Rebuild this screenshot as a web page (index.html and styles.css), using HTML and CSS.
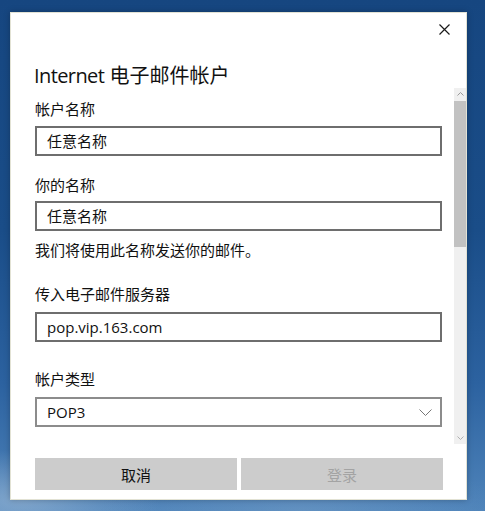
FILE: index.html
```html
<!DOCTYPE html>
<html lang="zh-CN">
<head>
<meta charset="utf-8">
<title>Internet 电子邮件帐户</title>
<link rel="stylesheet" href="styles.css">
</head>
<body>
<div class="dialog">
  <div class="header">
    <div class="close-row">
      <button class="close" aria-label="关闭">
        <svg width="11" height="11" viewBox="0 0 11 11"><path d="M0.5 0.5 L10.5 10.5 M10.5 0.5 L0.5 10.5" stroke="#1a1a1a" stroke-width="1.2" fill="none"/></svg>
      </button>
    </div>
    <h1 class="title"><span class="latin">Internet</span> 电子邮件帐户</h1>
  </div>
  <div class="scroll-row">
    <div class="content">
      <div class="label">帐户名称</div>
      <div class="field gap-7">任意名称</div>
      <div class="label gap-19">你的名称</div>
      <div class="field gap-6">任意名称</div>
      <div class="help gap-9">我们将使用此名称发送你的邮件。</div>
      <div class="label gap-24">传入电子邮件服务器</div>
      <div class="field gap-8">pop.vip.163.com</div>
      <div class="label gap-27">帐户类型</div>
      <div class="select gap-8">
        <span>POP3</span>
        <svg width="13" height="7" viewBox="0 0 13 7"><path d="M0.5 0.5 L6.5 6.5 L12.5 0.5" stroke="#777" stroke-width="1" fill="none"/></svg>
      </div>
    </div>
    <div class="scrollbar">
      <div class="sb-arrow">
        <svg width="7" height="4" viewBox="0 0 7 4"><path d="M0.5 3.5 L3.5 0.5 L6.5 3.5" stroke="#9a9a9a" stroke-width="1" fill="none"/></svg>
      </div>
      <div class="sb-thumb"></div>
      <div class="sb-track"></div>
      <div class="sb-arrow">
        <svg width="7" height="4" viewBox="0 0 7 4"><path d="M0.5 0.5 L3.5 3.5 L6.5 0.5" stroke="#b0b0b0" stroke-width="1" fill="none"/></svg>
      </div>
    </div>
  </div>
  <div class="footer">
    <button class="btn">取消</button>
    <button class="btn disabled">登录</button>
  </div>
</div>
</body>
</html>
```

FILE: styles.css
```css
* { box-sizing: border-box; }
html, body { margin: 0; padding: 0; }
body {
  width: 485px;
  height: 511px;
  overflow: hidden;
  font-family: "Open Sans", "Noto Sans CJK SC", sans-serif;
  color: #111;
  background:
    radial-gradient(ellipse 140px 50px at 20px 500px, rgba(170,195,220,0.55), rgba(170,195,220,0) 100%),
    radial-gradient(ellipse 200px 60px at 300px 511px, rgba(120,160,200,0.45), rgba(120,160,200,0) 100%),
    linear-gradient(180deg, #164680 0%, #1a4d88 45%, #2c62a0 75%, #4f84ba 100%);
  padding: 12px 0 0 10px;
}
.dialog {
  width: 457px;
  height: 488px;
  background: #fff;
  border: 1px solid #e2e2d4;
  box-shadow: 0 0 6px rgba(0,0,0,0.25);
  display: flex;
  flex-direction: column;
}
.header {
  height: 75px;
  flex: none;
}
.close-row {
  height: 32px;
  display: flex;
  justify-content: flex-end;
  padding-right: 6px;
}
.close {
  width: 32px;
  height: 32px;
  border: 0;
  background: transparent;
  padding: 0;
  display: flex;
  align-items: center;
  justify-content: center;
}
.title {
  margin: 18px 0 0 23px;
  font-size: 20px;
  line-height: 25px;
  font-weight: 400;
  color: #111;
}
.title .latin { letter-spacing: -0.6px; }
.scroll-row {
  height: 356px;
  flex: none;
  display: flex;
}
.content {
  flex: 1;
  padding: 11px 12px 0 24px;
  overflow: hidden;
}
.label, .help {
  font-size: 15px;
  line-height: 20px;
  color: #111;
}
.field, .select {
  height: 30px;
  border: 2px solid #6e6e6e;
  font-size: 15px;
  line-height: 26px;
  padding: 0 10px;
  color: #111;
}
.select {
  border-color: #8c8c8c;
  display: flex;
  align-items: center;
  justify-content: space-between;
  padding-right: 8px;
}
.gap-6 { margin-top: 6px; }
.gap-7 { margin-top: 7px; }
.gap-8 { margin-top: 8px; }
.gap-9 { margin-top: 9px; }
.gap-19 { margin-top: 19px; }
.gap-24 { margin-top: 24px; }
.gap-27 { margin-top: 27px; }
.scrollbar {
  width: 12px;
  flex: none;
  background: #f0f0f0;
  display: flex;
  flex-direction: column;
}
.sb-arrow {
  height: 12px;
  display: flex;
  align-items: center;
  justify-content: center;
}
.sb-thumb {
  height: 146px;
  background: #c2c2c2;
  margin-top: 1px;
}
.sb-track { flex: 1; }
.footer {
  flex: 1;
  display: flex;
  gap: 4px;
  padding: 14px 23px 0 24px;
}
.btn {
  flex: 1;
  height: 32px;
  border: 0;
  background: #cccccc;
  font-family: "Open Sans", "Noto Sans CJK SC", sans-serif;
  font-size: 15px;
  color: #111;
  padding: 0;
}
.btn.disabled { color: #a3a3a3; }
```
